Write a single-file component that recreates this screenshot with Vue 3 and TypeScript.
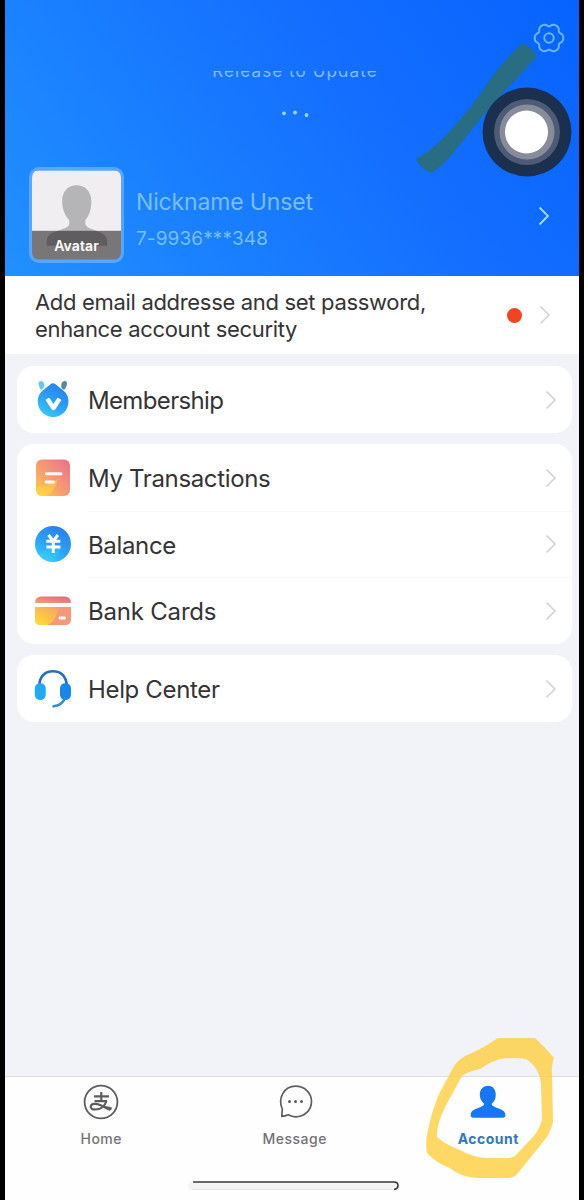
<script setup lang="ts">
interface Item { label: string; icon: string; cls: string }
const groups: Item[][] = [
  [{ label: 'Membership', icon: 'member', cls: 't-member' }],
  [
    { label: 'My Transactions', icon: 'bill', cls: 't-bill' },
    { label: 'Balance', icon: 'balance', cls: 't-balance' },
    { label: 'Bank Cards', icon: 'card', cls: 't-card' },
  ],
  [{ label: 'Help Center', icon: 'help', cls: 't-help' }],
]

// Six-lobed outline of the settings gear
function gearPath(cx: number, cy: number): string {
  const pts: string[] = []
  for (let d = 0; d < 360; d += 4) {
    const a = (d * Math.PI) / 180
    const r = 13.3 + 1.3 * Math.cos(6 * a) - 0.3 * Math.cos(12 * a)
    pts.push(`${(cx + r * Math.cos(a)).toFixed(2)} ${(cy + r * Math.sin(a)).toFixed(2)}`)
  }
  return `M${pts.join('L')}Z`
}
const gear = gearPath(549, 38)
</script>

<template>
  <div class="frame">
    <div class="screen">
      <header class="hero">
        <div class="release"><span>Release to Update</span></div>
        <svg class="dots" width="30" height="8" viewBox="0 0 30 8"><g fill="#9ed8ff"><circle cx="4" cy="4.300" r="1.900" /><circle cx="15" cy="3.500" r="1.900" /><circle cx="26.500" cy="6" r="1.900" /></g></svg>
        <div class="profile">
          <div class="avatar">
            <svg width="90" height="90" viewBox="0 0 90 90">
              <rect width="90" height="90" fill="#f0eef1" />
              <path d="M45 15c-9 0-14.500 6.500-14.500 16 0 9 3.500 15 7 19 1 6-1 7-7 9.500C20 63 15 65 15 71v5h61v-5c0-6-6-8-15-11.500-6-2.500-8-4-7-9.500 3.500-4 6-10 6-19 0-9.500-6-16-15-16z" fill="#b5b4b7" />
              <rect y="61" width="90" height="29" fill="#231f20" opacity=".58" />
            </svg>
            <span>Avatar</span>
          </div>
          <div class="names">
            <div class="nick">Nickname Unset</div>
            <div class="phone">7-9936***348</div>
          </div>
          <svg class="chev light" width="12" height="20" viewBox="0 0 12 20"><path d="M1.500 1.500 10 10 1.500 18.500" /></svg>
        </div>
      </header>

      <section class="notice">
        <p><span class="n1">Add email addresse and set password,</span><br><span class="n2">enhance account security</span></p>
        <i class="reddot" />
        <svg class="chev" width="12" height="20" viewBox="0 0 12 20"><path d="M1.500 1.500 10 10 1.500 18.500" /></svg>
      </section>

      <main class="list">
        <section v-for="(g, i) in groups" :key="i" class="group">
          <div v-for="it in g" :key="it.label" class="row">
            <svg class="icon" width="40" height="40" viewBox="0 0 40 40">
              <defs>
                <linearGradient id="blue" x1=".2" y1="1" x2=".75" y2="0"><stop offset="0" stop-color="#38cdfb" /><stop offset=".45" stop-color="#2ba2f5" /><stop offset="1" stop-color="#2a7df0" /></linearGradient>
                <linearGradient id="warm" x1="0" y1="1" x2="1" y2="0"><stop offset="0" stop-color="#ffd43b" /><stop offset=".4" stop-color="#f7a16b" /><stop offset="1" stop-color="#ec6e91" /></linearGradient>
                <linearGradient id="gold" x1="0" y1="1" x2=".8" y2="0"><stop offset="0" stop-color="#ffe02d" /><stop offset="1" stop-color="#f8a565" /></linearGradient>
                <linearGradient id="band" x1="0" y1="1" x2="1" y2="0"><stop offset="0" stop-color="#f5a267" /><stop offset="1" stop-color="#dd6190" /></linearGradient>
              </defs>
              <template v-if="it.icon === 'member'">
                <path d="M8 10C4.500 5 5 1 7.800 1s4.500 3 3 7z" fill="#6fc9dd" />
                <path d="M31 10c3.500-4 4-9 1-9s-4.500 3-3.500 7z" fill="#568b9b" />
                <path d="M17.500 4.300q2.500-2 5 0l7.500 5.900C33.500 13 35.500 16.500 35.500 21c0 9-6.500 16-15.300 16S4.700 30 4.700 21c0-4.500 2-8 5.300-10.800z" fill="url(#blue)" />
                <path d="m14.300 18.700 6.200 9.300 6-9.300" fill="none" stroke="#fff" stroke-width="4.400" stroke-linejoin="round" />
              </template>
              <template v-else-if="it.icon === 'bill'">
                <rect x="3" y="1.500" width="34" height="36.500" rx="6" fill="url(#warm)" />
                <path d="M3 29Q15 28 25 21q-3 12-11 17H9q-6 0-6-6z" fill="#ffdb3c" opacity=".5" />
                <path d="M13.500 15.700h14.500M13 24h7.500" stroke="#fff" stroke-width="3" stroke-linecap="round" />
              </template>
              <template v-else-if="it.icon === 'balance'">
                <circle cx="20" cy="20" r="18" fill="url(#blue)" />
                <path d="M20 38q8-7 9-17L5 29q6 9 15 9z" fill="#39dafa" opacity=".3" />
                <path d="m15.500 11 4.700 6 4.700-6M13.300 17.300h14M13.300 23h14M20.300 17v12" fill="none" stroke="#fff" stroke-width="3" />
              </template>
              <template v-else-if="it.icon === 'card'">
                <path d="M2 12q0-6.500 6.500-6.500h23Q38 5.500 38 12z" fill="url(#band)" />
                <path d="M2 16h36v12q0 6-6 6H8q-6 0-6-6z" fill="#f49a76" />
                <path d="M2 16h24q-3 14-11 18H8q-6 0-6-6z" fill="url(#gold)" />
                <path d="M27 27h4.500" stroke="#fff" stroke-width="3" stroke-linecap="round" />
              </template>
              <template v-else>
                <path d="M6 17C7 7 12 2.300 20 2.300S33 7 34 17" fill="none" stroke="#246fbe" stroke-width="2.600" />
                <rect x="1.800" y="14" width="11" height="17" rx="5.500" fill="#22a9f5" />
                <rect x="27" y="14" width="11" height="17" rx="5.500" fill="#1787f0" />
                <path d="M32 29q-3 7.500-11.500 8.300" fill="none" stroke="#328fc9" stroke-width="2.600" stroke-linecap="round" />
              </template>
            </svg>
            <span class="label" :class="it.cls">{{ it.label }}</span>
            <svg class="chev" width="12" height="20" viewBox="0 0 12 20"><path d="M1.500 1.500 10 10 1.500 18.500" /></svg>
          </div>
        </section>
      </main>

      <nav class="tabs">
        <div class="tab">
          <svg width="38" height="38" viewBox="0 0 38 38" fill="none" stroke="#5e5c5f">
            <circle cx="19" cy="19" r="16.400" stroke-width="1.800" />
            <path d="M12 13.300h15M19.300 9v9.500M12.500 18.200h12.500" stroke-width="2.200" />
            <path d="M24.500 18c-2 6-7 8.500-11.500 8.500-3 0-4.500-1.500-4.200-3.200.5-3 5.500-3 9.200-1.300 4 2 6.500 3.500 11.500 4" stroke-width="2.200" />
            <path d="M20 22.700q5 1 9.500 1.700L28 27.500q-4-1-8-4" fill="#5e5c5f" stroke-width=".5" />
          </svg>
          <span class="t-home">Home</span>
        </div>
        <div class="tab">
          <svg width="38" height="38" viewBox="0 0 38 38" fill="none" stroke="#5e5c5f">
            <path d="M6.300 26C1.500 15.500 8 3.200 19.500 3.200c9 0 16 6.700 16 15.300s-7 15.300-16 15.300c-3 0-5-.7-7.200-2-2 .9-4 1.500-6.500 1.600z" stroke-width="1.700" stroke-linejoin="round" />
            <g fill="#5e5c5f" stroke="none"><circle cx="13.500" cy="18.500" r="1.500" /><circle cx="19.500" cy="18.500" r="1.500" /><circle cx="25.500" cy="18.500" r="1.500" /></g>
          </svg>
          <span class="t-msg">Message</span>
        </div>
        <div class="tab active">
          <svg width="38" height="38" viewBox="0 0 38 38">
            <path d="M19 2.700c-5.300 0-8.200 4-8.200 9 0 4 1.800 7 4.200 9 .3 1.600-1.500 2.500-4.500 3.700-5 1.800-8.500 3-8.800 7.300 0 2 .8 3 2.600 3h29.400c2 0 2.800-1 2.700-3-.4-4.300-4.400-5.500-9.400-7.300-3-1.200-4.600-2.100-4.200-3.700 2.400-2 4-5 4-9 0-5-2.500-9-7.800-9z" fill="#1677f5" />
          </svg>
          <span class="t-acc">Account</span>
        </div>
        <div class="homebar">
          <svg width="214" height="12" viewBox="0 0 214 12" fill="none">
            <rect x="2" y="2" width="210" height="8" rx="4" fill="#f5f4f5" />
            <path d="M7 2h201q4 0 4 3.500T208 9.500" stroke="#3a383a" stroke-width="1.600" />
            <path d="M6 9.500h201" stroke="#e6e4e6" />
          </svg>
        </div>
      </nav>
    </div>

    <svg class="overlay" width="584" height="1200" viewBox="0 0 584 1200">
      <path d="M523 43q7 3 14 13-20 23-43 46l-37 46q-10 15-26 25-10-4-15-14 18-10 32-26 22-23 41-52 15-22 34-38z" fill="#286d82" />
      <g fill="none" stroke="#69b6ff" stroke-width="2">
        <path :d="gear" stroke-linejoin="round" />
        <circle cx="549" cy="38" r="4.700" />
      </g>
      <circle cx="527" cy="132" r="44.500" fill="#1b304e" />
      <circle cx="527" cy="132" r="33" fill="#4d5b76" />
      <circle cx="527" cy="132" r="27.500" fill="#888b9a" />
      <circle cx="526.500" cy="132" r="21.500" fill="#fff" />
      <path fill-rule="evenodd" d="M498 1038H535Q546 1048 554 1058 551 1066 552 1075L553 1122Q550 1134 543 1142L518 1173Q515 1178 507 1178H477Q460 1177 450 1168 436 1163 427 1153 425 1142 428 1130 432 1110 440 1092L453 1068Q458 1059 467 1055 480 1050 498 1038ZM500 1059Q514 1057 526 1059 540 1068 541 1085L542 1120Q538 1133 530 1140L516 1155Q513 1158 507 1158H487Q472 1157 460 1150 446 1145 437 1137 436 1126 445 1107L462 1076Q466 1072 480 1069 490 1062 500 1059Z" fill="#fdcf43" opacity=".82" />
    </svg>
  </div>
</template>

<style>
html, body { background: #000; }
</style>

<style scoped>
.frame { position: relative; width: 584px; height: 1200px; overflow: hidden; background: #000; font-family: Inter, "Liberation Sans", sans-serif; color: #353336; }
.screen { width: 574px; height: 1200px; margin-left: 5px; background: #f2f3f9; display: flex; flex-direction: column; overflow: hidden; }
.hero { height: 276px; flex: none; background: linear-gradient(54deg, #2190ff 0%, #1a80ff 30%, #146eff 62%, #0763ff 100%); display: flex; flex-direction: column; box-sizing: border-box; padding-top: 70.5px; }
.release { height: 12px; overflow: hidden; display: flex; justify-content: center; color: #83bdff; font-size: 17px; line-height: 20px; padding-left: 6px; }
.release span { margin-top: -9.500px; letter-spacing: 1.1px; white-space: nowrap; }
.dots { margin: 26.500px 0 0 274.500px; flex: none; }
.profile { display: flex; margin: 50px 29px 0 24px; height: 96px; }
.avatar { position: relative; box-sizing: border-box; width: 95px; height: 96px; border: 3px solid #58a6ff; border-radius: 10px; overflow: hidden; flex: none; }
.avatar svg { display: block; width: 89px; height: 90px; }
.avatar span { position: absolute; left: 0; right: 0; bottom: 4px; text-align: center; font-size: 14px; line-height: 20px; font-weight: 600; letter-spacing: .1px; color: #fff; }
.names { flex: 1; padding-left: 12px; color: #77bfff; white-space: nowrap; }
.nick { font-size: 23px; line-height: 30px; margin-top: 20px; letter-spacing: -.15px; }
.phone { font-size: 19px; line-height: 26px; margin-top: 9px; letter-spacing: .1px; }
.chev { flex: none; fill: none; stroke: #d3d2d6; stroke-width: 1.600; }
.light { stroke: #a5dcff; margin-top: 39px; stroke-width: 1.800; }
.notice { height: 78px; flex: none; background: #fff; display: flex; align-items: center; padding: 0 28px 0 30px; }
.notice p { margin: 1px 0 0; flex: 1; font-size: 22px; line-height: 26.500px; letter-spacing: -.32px; white-space: nowrap; }
.reddot { width: 15px; height: 15px; border-radius: 50%; background: #f04423; margin-right: 17px; }
.list { flex: 1; padding: 12px 7px 0 12px; display: flex; flex-direction: column; gap: 11.500px; }
.group { background: #fff; border-radius: 17px; }
.row { height: 66.500px; display: flex; align-items: center; padding: 1px 15px 0; box-sizing: border-box; }
.row + .row { background: linear-gradient(#f9f8fa, #f9f8fa) 71px 0 / 484px 1px no-repeat; }
.icon { flex: none; margin-left: .5px; }
.label { flex: 1; margin-left: 15.500px; font-size: 24px; line-height: 32px; padding-top: 2.500px; letter-spacing: -.35px; }
.t-member { letter-spacing: -.65px; }
.t-card { letter-spacing: -.2px; }
.tabs { position: relative; height: 123px; flex: none; border-top: 1.500px solid #dedde2; background: #fffefe; display: flex; }
.tab { width: 193.500px; flex: none; display: flex; flex-direction: column; align-items: center; padding-top: 6px; font-size: 14px; line-height: 18px; font-weight: 500; color: #737175; box-sizing: border-box; position: relative; left: -.5px; }
.tab svg { display: block; margin-bottom: 9px; }
.tab span { letter-spacing: .5px; }
.active { color: #2e7abd; font-weight: 700; }
.homebar { position: absolute; left: 181px; bottom: 8px; height: 12px; }
.homebar svg { display: block; }
.overlay { position: absolute; left: 0; top: 0; pointer-events: none; }
</style>
